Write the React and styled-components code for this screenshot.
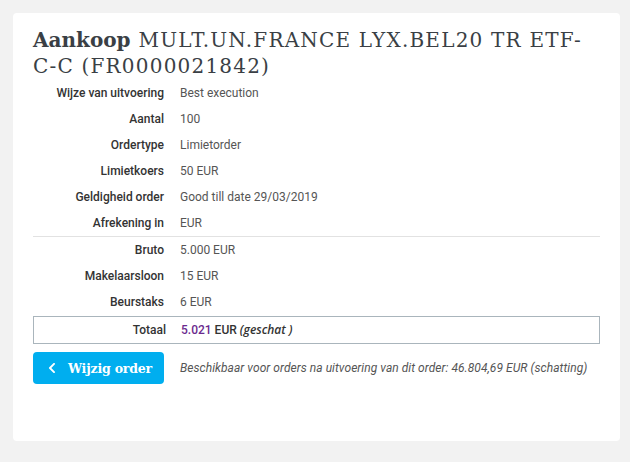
import React from "react";
import styled, { createGlobalStyle } from "styled-components";
import { FaChevronLeft } from "react-icons/fa";

const GlobalStyle = createGlobalStyle`
  html, body {
    margin: 0;
    background-color: #f2f2f2;
  }
  body {
    font-family: Roboto, "Liberation Sans", sans-serif;
  }
`;

const Page = styled.div`
  padding: 13px 10px 21px 13px;
`;

const Card = styled.div`
  background-color: #fff;
  border-radius: 4px;
  height: 428px;
  box-sizing: border-box;
  padding: 14px 20px 20px 20px;
`;

const Title = styled.h1`
  margin: 0 0 1px 0;
  font-family: "DejaVu Serif", "Liberation Serif", serif;
  font-size: 20px;
  line-height: 26px;
  font-weight: normal;
  color: #3a3f45;
`;

const Action = styled.span`
  font-weight: bold;
  margin-right: 8px;
`;

const Product = styled.span`
  letter-spacing: 1.2px;
`;

const Grid = styled.div`
  display: grid;
  grid-template-columns: 131px 1fr;
  column-gap: 16px;
  align-items: center;
  font-size: 12px;
  ${(p) =>
    p.$boxed &&
    `
    border: 1px solid #aab5bc;
    margin-top: 1px;
  `}
  ${(p) =>
    p.$divider &&
    `
    border-bottom: 1px solid #e2e2e2;
  `}
`;

const Label = styled.div`
  height: 26px;
  line-height: 26px;
  text-align: right;
  font-weight: 500;
  color: #333;
  margin-right: ${(p) => (p.$boxed ? "-1px" : "0")};
`;

const Value = styled.div`
  height: 26px;
  line-height: 26px;
  color: #555;
`;

const Amount = styled.span`
  color: #6b2a8e;
  font-weight: 500;
`;

const Strong = styled.span`
  color: #333;
  font-weight: 500;
`;

const Estimate = styled.span`
  font-family: "Open Sans", sans-serif;
  font-style: italic;
  font-weight: 600;
  color: #333;
`;

const Footer = styled.div`
  display: grid;
  grid-template-columns: 131px 1fr;
  column-gap: 16px;
  align-items: center;
  margin-top: 8px;
`;

const Button = styled.button`
  display: flex;
  align-items: center;
  gap: 10px;
  height: 32px;
  padding: 0 0 0 13px;
  border: none;
  border-radius: 4px;
  background-color: #00aeef;
  color: #fff;
  font-family: "DejaVu Serif", serif;
  font-weight: bold;
  font-size: 12.5px;
  letter-spacing: -0.2px;
  white-space: nowrap;
  cursor: pointer;
`;

const Note = styled.div`
  font-size: 12px;
  font-style: italic;
  font-weight: 400;
  letter-spacing: 0.05px;
  color: #555;
`;

const topRows = [
  ["Wijze van uitvoering", "Best execution"],
  ["Aantal", "100"],
  ["Ordertype", "Limietorder"],
  ["Limietkoers", "50 EUR"],
  ["Geldigheid order", "Good till date 29/03/2019"],
  ["Afrekening in", "EUR"],
];

const costRows = [
  ["Bruto", "5.000 EUR"],
  ["Makelaarsloon", "15 EUR"],
  ["Beurstaks", "6 EUR"],
];

export default function App() {
  return (
    <Page>
      <GlobalStyle />
      <Card>
        <Title>
          <Action>Aankoop</Action>
          <Product>MULT.UN.FRANCE LYX.BEL20 TR ETF-C-C (FR0000021842)</Product>
        </Title>
        <Grid $divider>
          {topRows.map(([l, v]) => (
            <React.Fragment key={l}>
              <Label>{l}</Label>
              <Value>{v}</Value>
            </React.Fragment>
          ))}
        </Grid>
        <Grid>
          {costRows.map(([l, v]) => (
            <React.Fragment key={l}>
              <Label>{l}</Label>
              <Value>{v}</Value>
            </React.Fragment>
          ))}
        </Grid>
        <Grid $boxed>
          <Label $boxed>Totaal</Label>
          <Value>
            <Amount>5.021</Amount> <Strong>EUR</Strong>{" "}
            <Estimate>(geschat )</Estimate>
          </Value>
        </Grid>
        <Footer>
          <Button>
            <FaChevronLeft size={12} />
            Wijzig order
          </Button>
          <Note>
            Beschikbaar voor orders na uitvoering van dit order: 46.804,69 EUR
            (schatting)
          </Note>
        </Footer>
      </Card>
    </Page>
  );
}
